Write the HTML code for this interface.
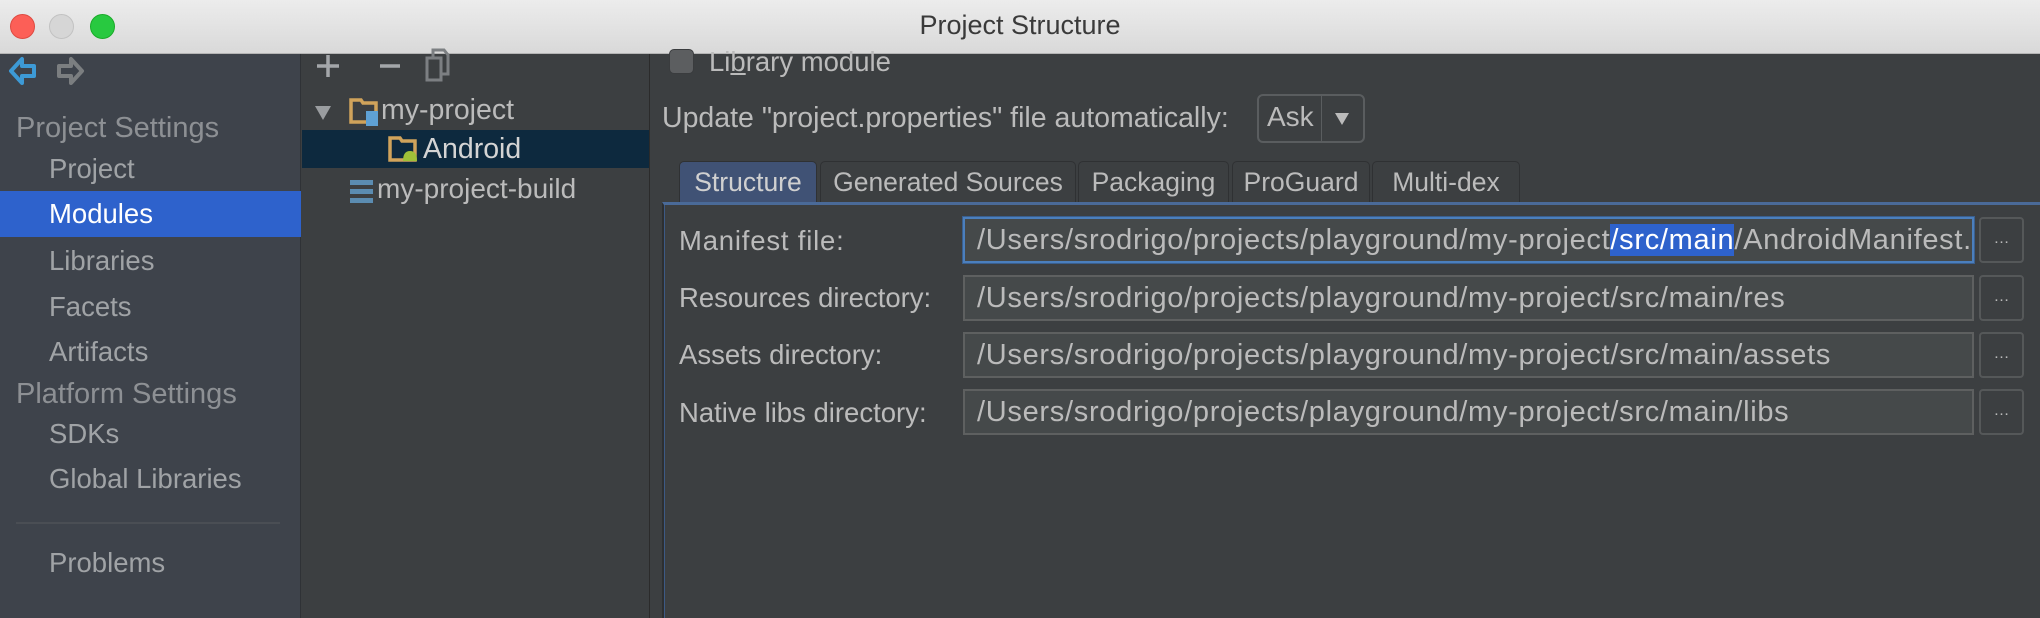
<!DOCTYPE html>
<html><head><meta charset="utf-8"><style>
*{margin:0;padding:0;box-sizing:border-box}
body{width:2040px;height:618px;overflow:hidden;background:#3c3f41;font-family:"Liberation Sans",sans-serif;color:#bbbbbb;position:relative}
.a{position:absolute;white-space:nowrap}
#title{left:0;top:0;width:2040px;height:54px;background:linear-gradient(#ececec,#d9d9d9);border-bottom:1px solid #b5b5b5}
.tl{position:absolute;top:14px;width:25px;height:25px;border-radius:50%}
#side{left:0;top:54px;width:301px;height:564px;background:#3e434b;border-right:1px solid #2f3236}
.st{font-size:29px;color:#8d9094}
.si{font-size:27.5px;color:#a0a3a6;left:49px}
#mid{left:302px;top:54px;width:348px;height:564px;background:#3c3f41;border-right:1px solid #2b2b2b}
.f{position:absolute;left:963px;width:1011px;height:46px;background:#45494a;border:2px solid #5e6060;font-size:29px;color:#bbbbbb;padding-left:12px;line-height:42px;letter-spacing:0.7px;overflow:hidden;white-space:nowrap}
.b{position:absolute;left:1979px;width:45px;height:46px;border:2px solid #555859;border-radius:4px;background:#3c3f41;color:#bbb;text-align:center;font-size:16px;line-height:40px}
.lb{font-size:27.5px;left:679px;color:#bbbbbb}
.tab{position:absolute;top:161px;height:41px;border:1px solid #2f3133;border-bottom:none;border-radius:5px 5px 0 0;background:#3c3f41;font-size:26.5px;text-align:center;line-height:40px;color:#bbb}
</style></head><body>
<div id="title" class="a">
<div class="tl" style="left:10px;background:#fc5f57;border:1px solid #de4a41"></div>
<div class="tl" style="left:49px;background:#d6d6d6;border:1px solid #c2c2c2"></div>
<div class="tl" style="left:90px;background:#28c940;border:1px solid #1aab29"></div>
<div class="a" style="left:0;width:2040px;text-align:center;top:10px;font-size:27px;color:#3a3a3a">Project Structure</div>
</div>
<div id="side" class="a">
<svg class="a" style="left:8px;top:0px" width="80" height="36"><path d="M3 17 L14 5 L14 12 L26 12 L26 22 L14 22 L14 29 Z" fill="none" stroke="#3d9ad6" stroke-width="4" stroke-linejoin="round"/><path d="M82 17 L71 5 L71 12 L59 12 L59 22 L71 22 L71 29 Z" fill="none" stroke="#7b7e80" stroke-width="4" stroke-linejoin="round" transform="translate(-8,0)"/></svg>
<div class="a st" style="left:16px;top:58px">Project Settings</div>
<div class="a si" style="top:99px">Project</div>
<div class="a" style="left:0;top:137px;width:301px;height:46px;background:#2e62cc"></div>
<div class="a si" style="top:144px;color:#fff">Modules</div>
<div class="a si" style="top:191px">Libraries</div>
<div class="a si" style="top:237px">Facets</div>
<div class="a si" style="top:282px">Artifacts</div>
<div class="a st" style="left:16px;top:324px">Platform Settings</div>
<div class="a si" style="top:364px">SDKs</div>
<div class="a si" style="top:409px">Global Libraries</div>
<div class="a" style="left:16px;top:468px;width:264px;height:2px;background:#4a4e54"></div>
<div class="a si" style="top:493px">Problems</div>
</div>
<div id="mid" class="a">
<svg class="a" style="left:14px;top:-7px" width="140" height="38"><path d="M12 8 V30 M1 19 H23" stroke="#a4a7aa" stroke-width="3.5"/><path d="M64 19 H84" stroke="#a4a7aa" stroke-width="3.5"/><rect x="111" y="11" width="14" height="22" fill="none" stroke="#7c7f82" stroke-width="3"/><path d="M117 11 V3 H128 L132 8 V27 H125" fill="none" stroke="#7c7f82" stroke-width="3"/></svg>
<svg class="a" style="left:11px;top:48px" width="20" height="20"><path d="M2 4 H18 L10 18 Z" fill="#9a9da0"/></svg>
<svg class="a" style="left:47px;top:42px" width="32" height="32"><path d="M2 4 H12 L14 7 H27 V26 H2 Z" fill="none" stroke="#d0a35b" stroke-width="3.5"/><rect x="17" y="15" width="12" height="15" fill="#5fa1d4"/></svg>
<div class="a" style="left:79px;top:40px;font-size:28.5px;color:#bbb">my-project</div>
<div class="a" style="left:0;top:76px;width:347px;height:38px;background:#0d293e"></div>
<svg class="a" style="left:86px;top:80px" width="32" height="30"><path d="M2 4 H12 L14 7 H27 V26 H2 Z" fill="none" stroke="#d0a35b" stroke-width="3.5"/><path d="M15 27 Q15 17 22 17 Q29 17 29 27 Z" fill="#9fc038"/></svg>
<div class="a" style="left:121px;top:79px;font-size:28.5px;color:#d4d4d4">Android</div>
<svg class="a" style="left:47px;top:122px" width="26" height="30"><rect x="1" y="4" width="23" height="5" fill="#5b8cb1"/><rect x="1" y="13" width="23" height="5" fill="#5b8cb1"/><rect x="1" y="22" width="23" height="5" fill="#5b8cb1"/></svg>
<div class="a" style="left:75px;top:119px;font-size:28px;color:#bbb">my-project-build</div>
</div>
<div class="a" style="left:669px;top:49px;width:25px;height:25px;border-radius:5px;background:#5c5e60;border:1px solid #3a3c3e"></div>
<div class="a" style="left:709px;top:46px;font-size:27.5px">Li<u>b</u>rary module</div>
<div class="a" style="left:662px;top:102px;font-size:28.5px">Update "project.properties" file automatically:</div>
<div class="a" style="left:1257px;top:94px;width:108px;height:49px;border:2px solid #5a5d5f;border-radius:6px;background:#3c3f41"></div>
<div class="a" style="left:1321px;top:96px;width:1px;height:45px;background:#5a5d5f"></div>
<div class="a" style="left:1267px;top:101px;font-size:28px">Ask</div>
<svg class="a" style="left:1334px;top:112px" width="16" height="14"><path d="M1 1 H15 L8 13 Z" fill="#bbb"/></svg>
<div class="a" style="left:662px;top:202px;width:1378px;height:416px;border-left:2px solid #2d2f31;border-top:3px solid #4a6a98"></div>
<div class="a" style="left:664px;top:205px;width:1376px;height:413px;border-left:1px solid #3d5a85"></div>
<div class="tab" style="left:679px;width:138px;background:#405275;color:#d0d0d0">Structure</div>
<div class="tab" style="left:820px;width:256px">Generated Sources</div>
<div class="tab" style="left:1078px;width:151px">Packaging</div>
<div class="tab" style="left:1232px;width:138px">ProGuard</div>
<div class="tab" style="left:1372px;width:148px">Multi-dex</div>
<div class="a lb" style="top:225px;letter-spacing:0.8px">Manifest file:</div>
<div class="f" style="top:217px;border-color:#4b7fbd;box-shadow:0 0 0 1px #3a5f8e">/Users/srodrigo/projects/playground/my-project<span style="background:#2e62cc;color:#fff">/src/main</span>/AndroidManifest.</div>
<div class="b" style="top:217px">…</div>
<div class="a lb" style="top:282px">Resources directory:</div>
<div class="f" style="top:275px">/Users/srodrigo/projects/playground/my-project/src/main/res</div>
<div class="b" style="top:275px">…</div>
<div class="a lb" style="top:339px">Assets directory:</div>
<div class="f" style="top:332px">/Users/srodrigo/projects/playground/my-project/src/main/assets</div>
<div class="b" style="top:332px">…</div>
<div class="a lb" style="top:397px">Native libs directory:</div>
<div class="f" style="top:389px">/Users/srodrigo/projects/playground/my-project/src/main/libs</div>
<div class="b" style="top:389px">…</div>
</body></html>
